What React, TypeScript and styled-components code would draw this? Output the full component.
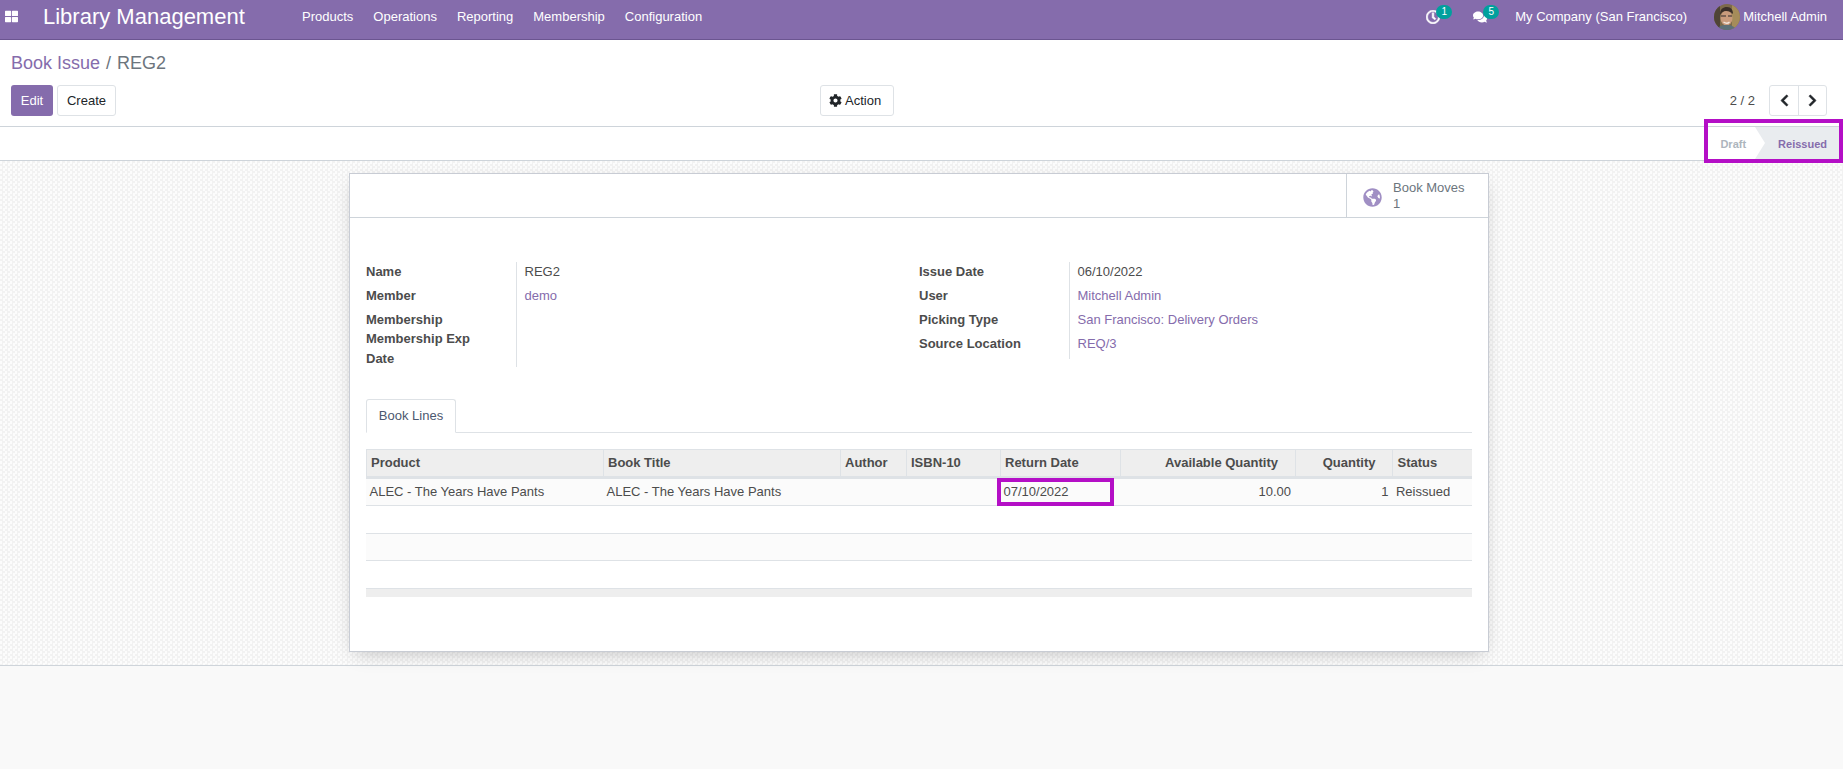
import React from 'react'
import styled, { createGlobalStyle } from 'styled-components'
import {
  FaThLarge,
  FaRegClock,
  FaComments,
  FaCog,
  FaChevronLeft,
  FaChevronRight,
  FaGlobeAmericas,
} from 'react-icons/fa'

const GlobalStyle = createGlobalStyle`
  html, body {
    margin: 0;
    padding: 0;
    height: 100%;
    background: #f9f9f9;
  }
  body {
    font-family: "Liberation Sans", Arial, sans-serif;
    font-size: 13px;
    color: #4c4c4c;
  }
`

const menus = ['Products', 'Operations', 'Reporting', 'Membership', 'Configuration']

const columns = [
  { label: 'Product', width: 237 },
  { label: 'Book Title', width: 237 },
  { label: 'Author', width: 66 },
  { label: 'ISBN-10', width: 94 },
  { label: 'Return Date', width: 120.4 },
  { label: 'Available Quantity', width: 174.6, right: true },
  { label: 'Quantity', width: 97.5, right: true },
  { label: 'Status', width: 79.5 },
]

const leftFields = [
  { label: 'Name', value: 'REG2' },
  { label: 'Member', value: 'demo', link: true },
  { label: 'Membership', value: '' },
]

const rightFields = [
  { label: 'Issue Date', value: '06/10/2022' },
  { label: 'User', value: 'Mitchell Admin', link: true },
  { label: 'Picking Type', value: 'San Francisco: Delivery Orders', link: true },
  { label: 'Source Location', value: 'REQ/3', link: true },
]

function Avatar() {
  return (
    <AvatarImage viewBox="0 0 26 26">
      <defs>
        <clipPath id="avatar-clip">
          <circle cx="13" cy="13" r="13" />
        </clipPath>
      </defs>
      <g clipPath="url(#avatar-clip)">
        <rect width="26" height="26" fill="#7d6a4a" />
        <rect x="18" width="8" height="26" fill="#a58c5a" />
        <rect width="6" height="26" fill="#4f4436" />
        <ellipse cx="12.5" cy="14" rx="6" ry="7.5" fill="#c99b7c" />
        <path d="M6 11c0-6 3-8 7-8s6 3 6 7c-2-2-4-3-7-3s-4 1-6 4z" fill="#3a2e28" />
        <path d="M7 12h5M14 12h4" stroke="#2f2a2a" strokeWidth="1.2" />
        <path d="M9.5 18c2 1.5 4.5 1.5 6 0" stroke="#f3e6dc" strokeWidth="1.3" fill="none" />
        <path d="M3 26c1-4 5-5 10-5s8 2 9 5z" fill="#5d7078" />
      </g>
    </AvatarImage>
  )
}

function App() {
  return (
    <Page>
      <GlobalStyle />
      <NavBar>
        <AppsButton>
          <FaThLarge />
        </AppsButton>
        <BrandName>Library Management</BrandName>
        <MenuList>
          {menus.map((menu) => (
            <MenuItem key={menu}>{menu}</MenuItem>
          ))}
        </MenuList>
        <SystemTray>
          <TrayIcon $thick>
            <FaRegClock />
            <Badge>1</Badge>
          </TrayIcon>
          <TrayIcon $wide>
            <FaComments />
            <Badge>5</Badge>
          </TrayIcon>
          <CompanyName>My Company (San Francisco)</CompanyName>
          <UserMenu>
            <Avatar />
            Mitchell Admin
          </UserMenu>
        </SystemTray>
      </NavBar>

      <ControlPanel>
        <Breadcrumb>
          <BreadcrumbLink>Book Issue</BreadcrumbLink>
          <BreadcrumbSlash>/</BreadcrumbSlash>
          <span>REG2</span>
        </Breadcrumb>
        <ControlRow>
          <ButtonGroup>
            <PrimaryButton>Edit</PrimaryButton>
            <DefaultButton>Create</DefaultButton>
          </ButtonGroup>
          <ActionButton>
            <FaCog />
            Action
          </ActionButton>
          <PagerGroup>
            <PagerValue>2 / 2</PagerValue>
            <Pager>
              <PagerButton>
                <FaChevronLeft />
              </PagerButton>
              <PagerButton>
                <FaChevronRight />
              </PagerButton>
            </Pager>
          </PagerGroup>
        </ControlRow>
      </ControlPanel>

      <StatusHeader>
        <StatusBar>
          <StatusStep>Draft</StatusStep>
          <StatusStep $current>Reissued</StatusStep>
          <Highlight $inset="-8px 0 -3px -16px" />
        </StatusBar>
      </StatusHeader>

      <SheetBackground>
        <Sheet>
          <ButtonBox>
            <StatButton>
              <StatIcon>
                <FaGlobeAmericas />
              </StatIcon>
              <StatText>
                Book Moves
                <br />1
              </StatText>
            </StatButton>
          </ButtonBox>

          <FieldColumns>
            <FieldGroup>
              <LabelColumn>
                {leftFields.map((field) => (
                  <FieldLabel key={field.label}>{field.label}</FieldLabel>
                ))}
                <LongLabel>Membership Exp Date</LongLabel>
              </LabelColumn>
              <ValueColumn>
                {leftFields.map((field) => (
                  <FieldValue key={field.label} $link={field.link}>
                    {field.value}
                  </FieldValue>
                ))}
              </ValueColumn>
            </FieldGroup>
            <FieldGroup>
              <LabelColumn>
                {rightFields.map((field) => (
                  <FieldLabel key={field.label}>{field.label}</FieldLabel>
                ))}
              </LabelColumn>
              <ValueColumn>
                {rightFields.map((field) => (
                  <FieldValue key={field.label} $link={field.link}>
                    {field.value}
                  </FieldValue>
                ))}
              </ValueColumn>
            </FieldGroup>
          </FieldColumns>

          <TabBar>
            <Tab>Book Lines</Tab>
          </TabBar>

          <LinesTable>
            <HeaderRow>
              {columns.map((col) => (
                <HeaderCell key={col.label} $right={col.right} $width={col.width}>
                  {col.label}
                </HeaderCell>
              ))}
            </HeaderRow>
            <DataRow $striped>
              <DataCell $width={columns[0].width}>ALEC - The Years Have Pants</DataCell>
              <DataCell $width={columns[1].width}>ALEC - The Years Have Pants</DataCell>
              <DataCell $width={columns[2].width} />
              <DataCell $width={columns[3].width} />
              <DataCell $width={columns[4].width}>
                07/10/2022
                <Highlight $inset="-1px 6px -1px -3px" />
              </DataCell>
              <DataCell $right $width={columns[5].width}>10.00</DataCell>
              <DataCell $right $width={columns[6].width}>1</DataCell>
              <DataCell $width={columns[7].width}>Reissued</DataCell>
            </DataRow>
            <EmptyRow />
            <EmptyRow $striped />
            <EmptyRow />
            <TableFooter />
          </LinesTable>
        </Sheet>
      </SheetBackground>
    </Page>
  )
}

const Page = styled.div`
  width: 1843px;
  height: 769px;
  overflow: hidden;
  display: flex;
  flex-direction: column;
  background: #f9f9f9;
`

const NavBar = styled.header`
  height: 39px;
  flex: none;
  display: flex;
  align-items: center;
  background: #856cac;
  border-bottom: 1px solid #6b5590;
  color: #fff;
`

const AppsButton = styled.span`
  width: 43px;
  padding-left: 5px;
  box-sizing: border-box;
  display: flex;
  align-items: center;
  font-size: 13px;
  margin-top: -6px;
`

const BrandName = styled.div`
  width: 259px;
  font-size: 22px;
  margin-top: -5px;
  white-space: nowrap;
`

const MenuList = styled.nav`
  display: flex;
  gap: 20px;
  font-size: 13px;
  margin-top: -6px;
`

const MenuItem = styled.span``

const SystemTray = styled.div`
  margin-left: auto;
  padding-right: 16px;
  display: flex;
  align-items: center;
  font-size: 13px;
  margin-top: -6px;
`

const TrayIcon = styled.span<{ $wide?: boolean; $thick?: boolean }>`
  position: relative;
  display: flex;
  font-size: 14px;
  margin-right: ${(p) => (p.$wide ? '28px' : '33px')};
  svg {
    stroke-width: ${(p) => (p.$thick ? '24px' : '0')};
  }
`

const Badge = styled.span`
  position: absolute;
  top: -5px;
  left: 10px;
  min-width: 16px;
  height: 14px;
  line-height: 14px;
  border-radius: 7px;
  background: #00a09d;
  color: #fff;
  font-size: 10px;
  text-align: center;
`

const CompanyName = styled.span`
  margin-right: 27px;
`

const UserMenu = styled.span`
  display: flex;
  align-items: center;
  gap: 3px;
`

const AvatarImage = styled.svg`
  width: 26px;
  height: 26px;
`

const ControlPanel = styled.section`
  height: 86px;
  flex: none;
  padding: 0 16px 0 11px;
  background: #fff;
  border-bottom: 1px solid #ced4da;
  display: flex;
  flex-direction: column;
`

const Breadcrumb = styled.div`
  height: 44px;
  padding-top: 1px;
  display: flex;
  align-items: center;
  gap: 6px;
  font-size: 18px;
  color: #6c757d;
`

const BreadcrumbLink = styled.span`
  color: #856cac;
`

const BreadcrumbSlash = styled.span`
  color: #6c757d;
`

const ControlRow = styled.div`
  display: grid;
  grid-template-columns: 809px auto 1fr;
  align-items: center;
`

const ButtonGroup = styled.div`
  display: flex;
  gap: 4px;
`

const BaseButton = styled.span`
  height: 31px;
  box-sizing: border-box;
  display: inline-flex;
  align-items: center;
  justify-content: center;
  border-radius: 3px;
  font-size: 13px;
`

const PrimaryButton = styled(BaseButton)`
  width: 42px;
  background: #856cac;
  color: #fff;
`

const DefaultButton = styled(BaseButton)`
  width: 59px;
  background: #fff;
  border: 1px solid #dee2e6;
  color: #212529;
`

const ActionButton = styled(DefaultButton)`
  width: 74px;
  justify-content: flex-start;
  padding-left: 8px;
  gap: 3px;
  svg {
    font-size: 13px;
  }
`

const PagerGroup = styled.div`
  display: flex;
  justify-content: flex-end;
  align-items: center;
  gap: 14px;
`

const PagerValue = styled.span`
  font-size: 13px;
  color: #4c4c4c;
`

const Pager = styled.div`
  display: flex;
  height: 31px;
  box-sizing: border-box;
  border: 1px solid #dee2e6;
  border-radius: 3px;
`

const PagerButton = styled.span`
  width: 28px;
  box-sizing: border-box;
  display: flex;
  align-items: center;
  justify-content: center;
  color: #212529;
  font-size: 13px;
  svg {
    stroke-width: 24px;
  }
  & + & {
    border-left: 1px solid #dee2e6;
  }
`

const StatusHeader = styled.div`
  height: 33px;
  flex: none;
  background: #fff;
  border-bottom: 1px solid #ced4da;
  display: flex;
  justify-content: flex-end;
`

const StatusBar = styled.div`
  position: relative;
  display: flex;
`

const StatusStep = styled.span<{ $current?: boolean }>`
  position: relative;
  display: flex;
  align-items: center;
  height: 33px;
  font-size: 11px;
  font-weight: bold;
  color: ${(p) => (p.$current ? '#856cac' : '#adb5bd')};
  background: ${(p) => (p.$current ? '#e9ecef' : 'transparent')};
  padding: ${(p) => (p.$current ? '0 16px 0 23px' : '0 9px 0 0')};
  ${(p) =>
    p.$current &&
    `
    &::before {
      content: '';
      position: absolute;
      left: 0;
      top: 0;
      border-left: 10px solid #fff;
      border-top: 16.5px solid transparent;
      border-bottom: 16.5px solid transparent;
    }
  `}
`

const Highlight = styled.span<{ $inset: string }>`
  position: absolute;
  inset: ${(p) => p.$inset};
  border: 4px solid #b40fc6;
  pointer-events: none;
`

const SheetBackground = styled.main`
  height: 505px;
  flex: none;
  box-sizing: border-box;
  padding: 12px 0 0 349px;
  border-bottom: 1px solid #ced4da;
  background-color: #fff;
  background-image: repeating-conic-gradient(#f2f2f2 0 25%, #fcfcfc 0 50%);
  background-size: 5px 5px;
`

const Sheet = styled.article`
  width: 1140px;
  height: 479px;
  box-sizing: border-box;
  background: #fff;
  border: 1px solid #c8ccd4;
  box-shadow: 0 6px 18px -6px rgba(0, 0, 0, 0.25);
  display: flex;
  flex-direction: column;
`

const ButtonBox = styled.div`
  height: 43px;
  flex: none;
  border-bottom: 1px solid #ced4da;
  display: flex;
  justify-content: flex-end;
`

const StatButton = styled.div`
  width: 142px;
  box-sizing: border-box;
  border-left: 1px solid #ced4da;
  display: flex;
  align-items: center;
  padding-left: 16px;
  gap: 11px;
`

const StatIcon = styled.span`
  display: flex;
  font-size: 19px;
  margin-top: 3px;
  color: #a08fc4;
`

const StatText = styled.span`
  font-size: 13px;
  line-height: 16px;
  color: #6c757d;
`

const FieldColumns = styled.div`
  display: grid;
  grid-template-columns: 553px 1fr;
  align-items: start;
  padding: 43.5px 0 0 16px;
`

const FieldGroup = styled.div`
  display: flex;
`

const LabelColumn = styled.div`
  width: 151px;
  flex: none;
  border-right: 1px solid #dee2e6;
  box-sizing: border-box;
  padding-right: 20px;
  display: flex;
  flex-direction: column;
`

const FieldLabel = styled.div`
  height: 24.3px;
  line-height: 20px;
  font-weight: bold;
  font-size: 13px;
  color: #4c4c4c;
`

const LongLabel = styled(FieldLabel)`
  height: auto;
  margin-top: -5.3px;
  margin-bottom: -2px;
`

const ValueColumn = styled.div`
  padding-left: 7.5px;
  display: flex;
  flex-direction: column;
`

const FieldValue = styled.div<{ $link?: boolean }>`
  height: 24.3px;
  line-height: 20px;
  font-size: 13px;
  color: ${(p) => (p.$link ? '#856cac' : '#4c4c4c')};
`

const TabBar = styled.div`
  margin: 31.5px 16px 0 16px;
  height: 33px;
  flex: none;
  border-bottom: 1px solid #dee2e6;
  display: flex;
`

const Tab = styled.div`
  width: 90px;
  height: 34px;
  box-sizing: border-box;
  border: 1px solid #dee2e6;
  border-bottom-color: #fff;
  border-radius: 3px 3px 0 0;
  background: #fff;
  display: flex;
  align-items: center;
  justify-content: center;
  font-size: 13px;
  color: #4c5870;
`

const LinesTable = styled.div`
  margin: 16px 16px 0 16px;
  display: flex;
  flex-direction: column;
`

const HeaderRow = styled.div`
  height: 30px;
  box-sizing: border-box;
  flex: none;
  display: flex;
  background: #eeeeee;
  border-top: 1px solid #dee2e6;
  border-bottom: 3px solid #dee2e6;
`

const HeaderCell = styled.div<{ $right?: boolean; $width: number }>`
  width: ${(p) => p.$width}px;
  box-sizing: border-box;
  flex: none;
  padding: ${(p) => (p.$right ? '0 17px 0 4px' : '0 4px')};
  line-height: 26px;
  font-size: 13px;
  font-weight: bold;
  color: #4c4c4c;
  border-left: 1px solid #dee2e6;
  text-align: ${(p) => (p.$right ? 'right' : 'left')};
  white-space: nowrap;
`

const DataRow = styled.div<{ $striped?: boolean }>`
  height: 27.5px;
  box-sizing: border-box;
  flex: none;
  display: flex;
  background: ${(p) => (p.$striped ? '#fbfbfb' : '#fff')};
  border-bottom: 1px solid #dee2e6;
`

const DataCell = styled.div<{ $right?: boolean; $width: number }>`
  width: ${(p) => p.$width}px;
  position: relative;
  box-sizing: border-box;
  flex: none;
  padding: 0 4px 0 3.5px;
  line-height: 26px;
  font-size: 13px;
  color: #4c4c4c;
  text-align: ${(p) => (p.$right ? 'right' : 'left')};
  white-space: nowrap;
`

const EmptyRow = styled(DataRow)`
  height: 27.5px;
`

const TableFooter = styled.div`
  height: 8px;
  flex: none;
  background: #eeeeee;
`

export default App
